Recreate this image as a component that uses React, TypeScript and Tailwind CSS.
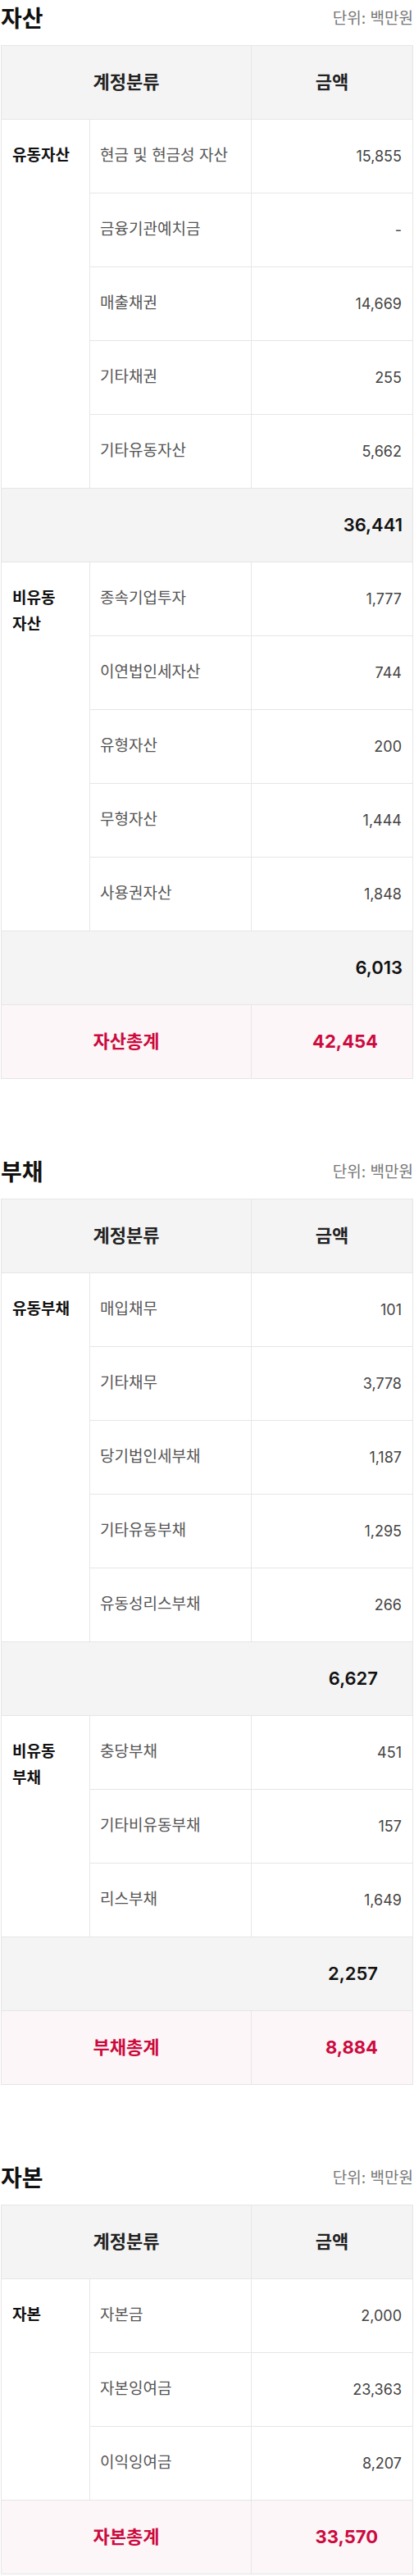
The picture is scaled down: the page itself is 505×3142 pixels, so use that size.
import React from 'react';

type Group = { label: string; items: [string, string][]; subtotal?: string };
type Section = { title: string; groups: Group[]; subPad: string; total: [string, string] };

const SECTIONS: Section[] = [
    {
        title: '자산',
        subPad: 'pr-[12px]',
        groups: [
            {
                label: '유동자산',
                items: [['현금 및 현금성 자산', '15,855'], ['금융기관예치금', '-'], ['매출채권', '14,669'], ['기타채권', '255'], ['기타유동자산', '5,662']],
                subtotal: '36,441',
            },
            {
                label: '비유동 자산',
                items: [['종속기업투자', '1,777'], ['이연법인세자산', '744'], ['유형자산', '200'], ['무형자산', '1,444'], ['사용권자산', '1,848']],
                subtotal: '6,013',
            },
        ],
        total: ['자산총계', '42,454'],
    },
    {
        title: '부채',
        subPad: 'pr-[42px]',
        groups: [
            {
                label: '유동부채',
                items: [['매입채무', '101'], ['기타채무', '3,778'], ['당기법인세부채', '1,187'], ['기타유동부채', '1,295'], ['유동성리스부채', '266']],
                subtotal: '6,627',
            },
            {
                label: '비유동 부채',
                items: [['충당부채', '451'], ['기타비유동부채', '157'], ['리스부채', '1,649']],
                subtotal: '2,257',
            },
        ],
        total: ['부채총계', '8,884'],
    },
    {
        title: '자본',
        subPad: 'pr-[12px]',
        groups: [
            { label: '자본', items: [['자본금', '2,000'], ['자본잉여금', '23,363'], ['이익잉여금', '8,207']] },
        ],
        total: ['자본총계', '33,570'],
    },
];

const ROW_SPAN: Record<number, string> = { 3: 'row-span-3', 5: 'row-span-5' };

function BalanceTable({ s }: { s: Section }) {
    return (
        <div className="grid grid-cols-[107px_196px_196px] auto-rows-[89px] gap-px bg-[#e6e6e6] border border-[#e6e6e6]">
            {/* header */}
            <div className="col-span-2 flex items-center justify-center bg-[#f4f4f4] text-[22px] font-bold text-[#222]">계정분류</div>
            <div className="flex items-center justify-center bg-[#f4f4f4] text-[22px] font-bold text-[#222]">금액</div>

            {s.groups.map(g => (
                <React.Fragment key={g.label}>
                    <div className={`${ROW_SPAN[g.items.length]} bg-white px-[13px] pt-[28px] text-[19px] leading-[32px] font-bold text-[#111] break-keep`}>
                        {g.label}
                    </div>
                    {g.items.map(([name, v]) => (
                        <React.Fragment key={name}>
                            <div className="col-start-2 flex items-center bg-white pl-[12px] text-[19px] text-[#555]">{name}</div>
                            <div className="flex items-center justify-end bg-white pr-[13px] text-[18px] text-[#444]">{v}</div>
                        </React.Fragment>
                    ))}
                    {g.subtotal && (
                        <div className={`col-span-3 flex items-center justify-end bg-[#f4f4f4] ${s.subPad} text-[22px] font-semibold text-[#111]`}>
                            {g.subtotal}
                        </div>
                    )}
                </React.Fragment>
            ))}

            {/* total */}
            <div className="col-span-2 flex items-center justify-center bg-[#fcf6f8] text-[22px] font-bold text-[#cc0a3e]">{s.total[0]}</div>
            <div className="flex items-center justify-end bg-[#fcf6f8] pr-[42px] text-[22px] font-bold text-[#cc0a3e]">{s.total[1]}</div>
        </div>
    );
}

export default function App() {
    return (
        <div className="w-[505px] bg-white px-[1px] font-['Inter','Noto_Sans_CJK_KR',sans-serif]">
            {SECTIONS.map((s, idx) => (
                <section key={s.title} className={idx > 0 ? 'mt-[91px]' : ''}>
                    <div className="flex h-[46px] items-center justify-between mb-[9px]">
                        <h2 className="text-[28px] font-bold text-[#111]">{s.title}</h2>
                        <span className="text-[19px] text-[#777]">단위: 백만원</span>
                    </div>
                    <BalanceTable s={s} />
                </section>
            ))}
        </div>
    );
}
